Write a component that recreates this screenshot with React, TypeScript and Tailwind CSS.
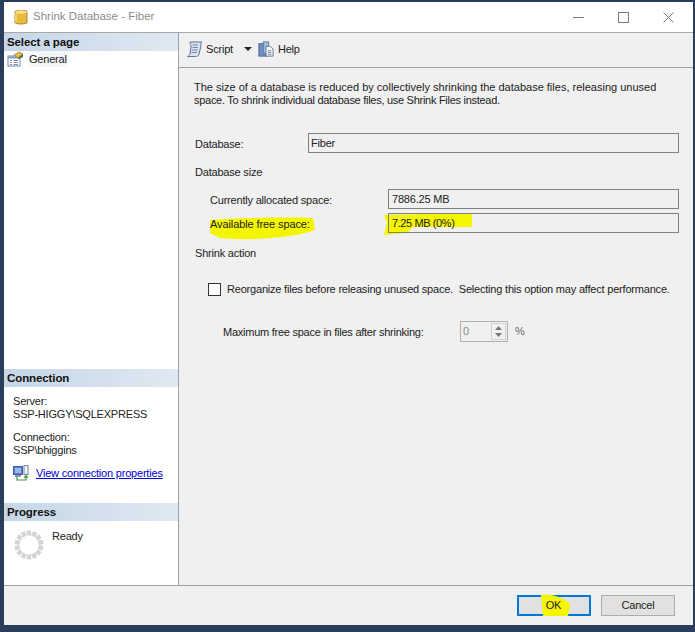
import React from "react";

function DbIcon() {
  return (
    <svg width="16" height="18" viewBox="0 0 16 18">
      <path d="M2 3.5C2 2 14 2 14 3.5V14.5C14 16.5 2 16.5 2 14.5Z" fill="#e8b93a" stroke="#a98a3c" strokeWidth="1" />
      <ellipse cx="8" cy="4" rx="5.5" ry="1.8" fill="#f7e08a" />
      <path d="M3 5V14" stroke="#f6dc84" strokeWidth="1.5" />
    </svg>
  );
}

function ScriptIcon() {
  return (
    <svg width="18" height="18" viewBox="0 0 18 18" fill="none">
      <path d="M4 2H16C14.5 3 14.5 4.5 15 6L13 14C12.5 16 11 16.5 9.5 16.5H1.5C3 16 3.5 15 4 14L5 7C5.5 5 3.5 3.5 4 2Z" fill="#dbe4ee" stroke="#5d7594" />
      <path d="M6.5 5H12M6.5 7.5H12M6 10H11.5M5.5 12.5H11" stroke="#7189a6" />
    </svg>
  );
}

function HelpIcon() {
  return (
    <svg width="16" height="16" viewBox="0 0 18 18">
      <rect x="1" y="3" width="9" height="14" fill="#6f8fc4" stroke="#48628f" />
      <rect x="6" y="1" width="6" height="13" fill="#a3bbdf" stroke="#5d78a6" />
      <path d="M9 6H14L17 9V17H9Z" fill="#f5f7fa" stroke="#5f6f88" />
      <path d="M11 11H15M11 13H15M11 15H15" stroke="#6c7c95" />
    </svg>
  );
}

function GeneralIcon() {
  return (
    <svg width="17" height="16" viewBox="0 0 17 16">
      <rect x="1" y="5" width="12" height="10" fill="#fff" stroke="#6f87a8" />
      <path d="M1.5 5.5H12.5V7.5H1.5Z" fill="#7f9cc4" />
      <path d="M3 9.5H5M6.5 9.5H11M3 11.5H5M6.5 11.5H11M3 13.5H5M6.5 13.5H11" stroke="#7d92ae" />
      <path d="M7 4L12 1L16 3L11 7Z" fill="#e9bd3f" stroke="#8f7a36" strokeWidth="0.7" />
      <path d="M11 7L16 3V6L12 8Z" fill="#4f6f4f" />
    </svg>
  );
}

function ConnectionIcon() {
  return (
    <svg className="shrink-0" width="16" height="16" viewBox="0 0 16 16" fill="none">
      <rect x="0.5" y="1.5" width="9" height="8" fill="#5b82d6" stroke="#3e5c9e" />
      <rect x="2" y="3" width="6" height="5" fill="#9bb8ea" />
      <rect x="2" y="10" width="6" height="2" fill="#8a9ab5" />
      <rect x="11" y="0.5" width="4" height="9" fill="#eef1f6" stroke="#7b8799" />
      <path d="M4 12V15H13V11M11 13L13 10.5L15 13" stroke="#3f9a3f" strokeWidth="1.2" />
    </svg>
  );
}

function ProgressRing() {
  const marks = Array.from({ length: 14 }, (_, i) => (i * 360) / 14);
  return (
    <svg width="30" height="30" viewBox="0 0 30 30">
      {marks.map((deg) => (
        <rect key={deg} x="12.8" y="0.5" width="4.4" height="5" fill="#d4d4d4" transform={`rotate(${deg} 15 15)`} />
      ))}
    </svg>
  );
}

function PanelHeader({ label }: { label: string }) {
  return (
    <div className="h-[18px] pl-[3px] pt-[1px] flex items-center bg-gradient-to-r from-[#c6d6e6] to-[#dfe9f2] font-bold text-[11.5px] tracking-[-0.1px] text-[#111]">
      {label}
    </div>
  );
}

export default function App() {
  return (
    <div className="w-[695px] h-[632px] bg-[#2a3e5c] pt-[2px] pl-[4px] pr-[2px] pb-[7px] font-['Liberation_Sans',sans-serif] text-[11px] tracking-[-0.2px] text-[#222] overflow-hidden">
      <div className="h-full flex flex-col bg-[#f0f0f0]">
        <div className="h-[31px] shrink-0 bg-white border-b border-[#a8a8a8] flex items-center pl-[9px]">
          <DbIcon />
          <span className="ml-[4px] text-[11.5px] tracking-normal text-[#8c8c8c]">Shrink Database - Fiber</span>
          <div className="ml-auto flex items-center gap-[34px] pr-[19px] text-[#7a7a7a]">
            <svg width="11" height="11" viewBox="0 0 11 11"><path d="M0 5.5H11" stroke="currentColor" /></svg>
            <svg width="11" height="11" viewBox="0 0 11 11"><rect x="0.5" y="0.5" width="10" height="10" fill="none" stroke="currentColor" /></svg>
            <svg width="11" height="11" viewBox="0 0 11 11"><path d="M0.5 0.5L10.5 10.5M10.5 0.5L0.5 10.5" stroke="currentColor" /></svg>
          </div>
        </div>

        <div className="flex-1 flex min-h-0">
          <div className="w-[175px] shrink-0 bg-white border-r border-[#a0a0a0] flex flex-col">
            <PanelHeader label="Select a page" />
            <div className="h-[16px] flex items-center pl-[3px]">
              <GeneralIcon />
              <span className="ml-[5px] bg-[#f4f6f8] pr-[1px]">General</span>
            </div>

            <div className="mt-[302px]">
              <PanelHeader label="Connection" />
            </div>
            <div className="pl-[9px] pt-[8px] leading-[13px]">
              <div>Server:</div>
              <div>SSP-HIGGY\SQLEXPRESS</div>
              <div className="mt-[10px]">Connection:</div>
              <div>SSP\bhiggins</div>
            </div>
            <div className="flex items-center pl-[9px] mt-[8px] h-[16px]">
              <ConnectionIcon />
              <a className="ml-[7px] text-[#0000d8] underline whitespace-nowrap">View connection properties</a>
            </div>

            <div className="mt-[22px]">
              <PanelHeader label="Progress" />
            </div>
            <div className="flex pl-[10px] pt-[9px]">
              <ProgressRing />
              <span className="ml-[8px] -mt-[2px]">Ready</span>
            </div>
          </div>

          <div className="flex-1 min-w-0 flex flex-col">
            <div className="h-[35px] shrink-0 border-b border-[#a0a0a0] flex items-center pl-[7px] pb-[2px]">
              <ScriptIcon />
              <span className="ml-[2px]">Script</span>
              <svg className="ml-[11px]" width="8" height="4" viewBox="0 0 8 4"><path d="M0 0H8L4 4Z" fill="#222" /></svg>
              <span className="ml-[6px]"><HelpIcon /></span>
              <span className="ml-[4px]">Help</span>
            </div>

            <div className="flex-1 pl-[16px] pr-[14px]">
              <div className="pt-[13px] leading-[13px] -ml-[1px] whitespace-nowrap">
                <div className="tracking-normal">The size of a database is reduced by collectively shrinking the database files, releasing unused</div>
                <div className="tracking-[-0.28px]">space. To shrink individual database files, use Shrink Files instead.</div>
              </div>

              <div className="mt-[26px] flex items-center h-[20px]">
                <span className="w-[113px] shrink-0 pt-[2px]">Database:</span>
                <div className="flex-1 h-[20px] border border-[#808080] pl-[2px] flex items-center">Fiber</div>
              </div>

              <div className="mt-[13px] leading-[13px]">Database size</div>

              <div className="mt-[10px] pl-[15px] flex items-center h-[20px]">
                <span className="w-[178px] shrink-0 pt-[2px]">Currently allocated space:</span>
                <div className="flex-1 h-[20px] border border-[#808080] pl-[3px] flex items-center">7886.25 MB</div>
              </div>

              <div className="relative mt-[4px] pl-[15px] flex items-center h-[20px]">
                <svg className="absolute left-0 top-0 overflow-visible" width="1" height="1">
                  <path d="M15 7C40 5 90 4 118 5L120 17C100 25 50 28 25 25L15 20Z" fill="#f4f600" />
                  <path d="M189 2L277 0V14H218L212 20L189 22L192 10Z" fill="#f4f600" />
                </svg>
                <span className="relative w-[178px] shrink-0 pt-[2px] tracking-[-0.1px]">Available free space:</span>
                <div className="relative flex-1 h-[20px] border border-[#808080] pl-[3px] flex items-center tracking-[-0.4px]">7.25 MB (0%)</div>
              </div>

              <div className="mt-[14px] leading-[13px]">Shrink action</div>

              <label className="mt-[22px] ml-[13px] flex items-center h-[14px]">
                <span className="w-[13px] h-[13px] shrink-0 border border-[#333] bg-white" />
                <span className="ml-[6px] whitespace-nowrap">Reorganize files before releasing unused space.&nbsp; Selecting this option may affect performance.</span>
              </label>

              <div className="mt-[25px] ml-[28px] flex items-center h-[21px]">
                <span className="w-[237px] shrink-0 pt-[1px] tracking-[-0.25px]">Maximum free space in files after shrinking:</span>
                <div className="w-[48px] h-[21px] border border-[#b0b0b0] flex items-center justify-between pl-[2px] pr-[1px] text-[#8a8a8a]">
                  <span>0</span>
                  <div className="w-[15px] h-[17px] border border-[#d0d0d0] flex flex-col items-center justify-center gap-[3px]">
                    <svg width="7" height="4" viewBox="0 0 7 4"><path d="M3.5 0L7 4H0Z" fill="#777" /></svg>
                    <svg width="7" height="4" viewBox="0 0 7 4"><path d="M0 0H7L3.5 4Z" fill="#777" /></svg>
                  </div>
                </div>
                <span className="ml-[7px] text-[#666]">%</span>
              </div>
            </div>
          </div>
        </div>

        <div className="h-[40px] shrink-0 border-t border-[#a0a0a0] flex items-center justify-end pr-[18px] gap-[10px]">
          <button className="relative w-[74px] h-[21px] border-2 border-[#0078d7] bg-[#e1e1e1] flex items-center justify-center">
            <svg className="absolute left-0 top-0 overflow-visible" width="1" height="1">
              <path d="M22 -2C32 -4 46 2 51 7L49 19H24Z" fill="#f4f600" />
            </svg>
            <span className="relative -ml-[1px]">OK</span>
          </button>
          <button className="w-[74px] h-[21px] border border-[#adadad] bg-[#e1e1e1] flex items-center justify-center">Cancel</button>
        </div>
      </div>
    </div>
  );
}
